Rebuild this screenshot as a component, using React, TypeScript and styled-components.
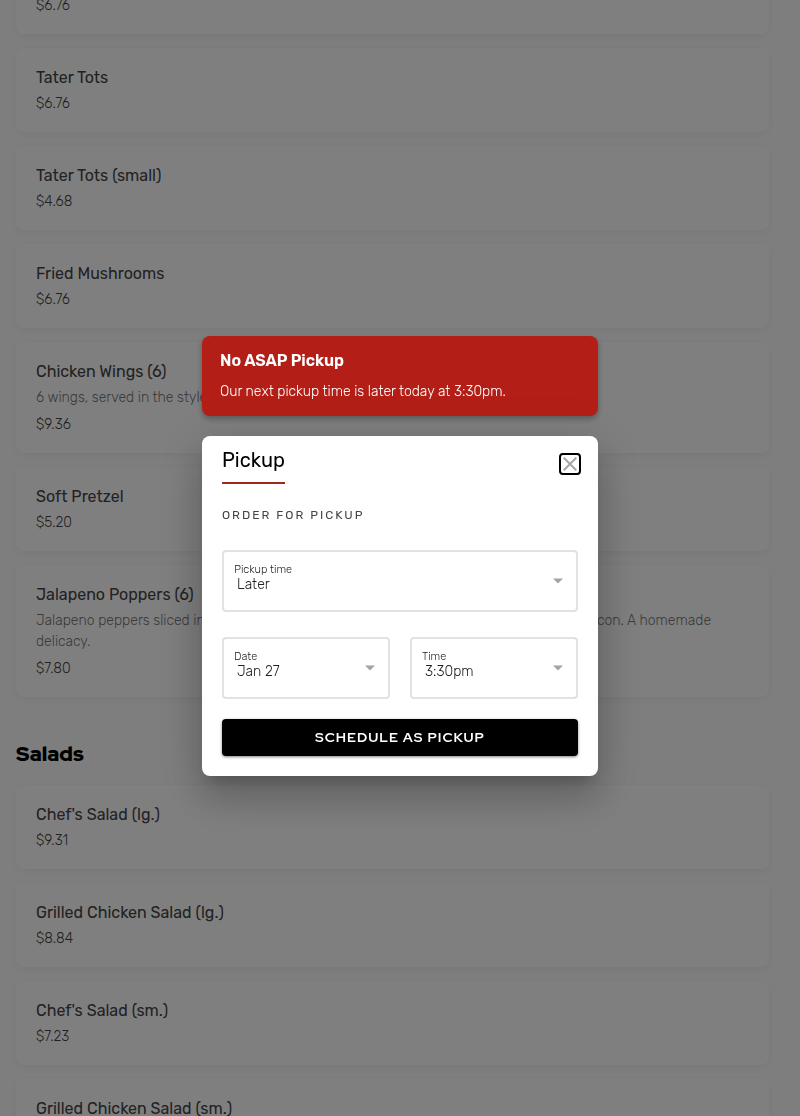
import React from "react";
import styled, { createGlobalStyle } from "styled-components";

const GlobalStyle = createGlobalStyle`
  *, *::before, *::after { box-sizing: border-box; }
  body {
    margin: 0;
    background: #fdfdfd;
    color: #000;
    font-family: Rubik, Inter, Roboto, "Liberation Sans", sans-serif;
  }
  h1, h2, h3, p, ul { margin: 0; padding: 0; }
  button, select { font-family: inherit; }
`;

const Page = styled.div`
  height: 100vh;
  overflow: hidden;
`;

const Menu = styled.main`
  margin-top: -50px;
  padding: 0 31px 0 16px;
`;

const SectionTitle = styled.h2`
  margin: 44px 0 18px;
  font-family: "Red Hat Display", Montserrat, Inter, sans-serif;
  font-size: 21px;
  line-height: 26px;
  font-weight: 900;
`;

const ItemList = styled.ul`
  display: flex;
  flex-direction: column;
  gap: 14px;
  list-style: none;
`;

const ItemCard = styled.li`
  padding: 20px 20px 18px;
  border-radius: 8px;
  background: #fff;
  box-shadow: 0 2px 8px rgba(0, 0, 0, 0.06);
`;

const ItemName = styled.h3`
  font-size: 16px;
  line-height: 20px;
  font-weight: 400;
  color: #444;
`;

const ItemDescription = styled.p`
  margin: 5px 0 7px;
  font-size: 14px;
  line-height: 21px;
  font-weight: 300;
  color: #777;
`;

const ItemPrice = styled.p`
  margin-top: 6px;
  font-size: 14px;
  line-height: 20px;
  font-weight: 300;
  color: #444;
`;

const Overlay = styled.div`
  position: fixed;
  inset: 0;
  display: flex;
  flex-direction: column;
  align-items: center;
  justify-content: center;
  gap: 20px;
  padding: 0 16px 4px;
  background: rgba(0, 0, 0, 0.5);
`;

const Alert = styled.div`
  display: flex;
  flex-direction: column;
  gap: 11px;
  width: 100%;
  max-width: 396px;
  padding: 15px 18px 14px;
  border-radius: 8px;
  background: #b31f17;
  color: #fff;
  box-shadow: 0 3px 6px rgba(0, 0, 0, 0.3);
`;

const AlertTitle = styled.h2`
  font-size: 16px;
  line-height: 20px;
  font-weight: 600;
`;

const AlertText = styled.p`
  font-size: 14px;
  line-height: 20px;
  font-weight: 300;
`;

const Dialog = styled.section`
  width: 100%;
  max-width: 396px;
  padding: 12px 20px 20px;
  border-radius: 8px;
  background: #fff;
  box-shadow: 0 11px 15px -7px rgba(0, 0, 0, 0.2),
    0 24px 38px 3px rgba(0, 0, 0, 0.14), 0 9px 46px 8px rgba(0, 0, 0, 0.12);
`;

const DialogHeader = styled.header`
  display: flex;
  align-items: flex-start;
  justify-content: space-between;
`;

const DialogTitle = styled.h2`
  padding-bottom: 10px;
  border-bottom: 2px solid #9c2a1c;
  font-size: 20px;
  line-height: 24px;
  font-weight: 400;
`;

const CloseButton = styled.button`
  display: flex;
  align-items: center;
  justify-content: center;
  width: 22px;
  height: 22px;
  margin: 5px -3px 0 0;
  padding: 0;
  border: 2px solid #000;
  border-radius: 4px;
  background: #fff;
  cursor: pointer;
`;

const Caption = styled.p`
  margin: 22px 0 26px;
  font-size: 12px;
  line-height: 18px;
  letter-spacing: 2px;
  text-transform: uppercase;
  color: #444;
`;

const Form = styled.form`
  display: grid;
  grid-template-columns: 1fr 1fr;
  column-gap: 20px;
`;

const Field = styled.div<{ $wide?: boolean }>`
  position: relative;
  grid-column: ${(p) => (p.$wide ? "1 / -1" : "auto")};
  margin-bottom: ${(p) => (p.$wide ? "25px" : "20px")};
`;

const FieldLabel = styled.label`
  position: absolute;
  top: 13px;
  left: 12px;
  font-size: 11px;
  line-height: 14px;
  font-weight: 300;
  color: #222;
  pointer-events: none;
`;

const FieldSelect = styled.select`
  display: block;
  width: 100%;
  height: 62px;
  padding: 6px 32px 0 13px;
  border: 2px solid #e2e2e2;
  border-radius: 4px;
  appearance: none;
  background: #fff;
  color: #222;
  font-size: 14px;
  font-weight: 300;
`;

const FieldArrow = styled.svg`
  position: absolute;
  top: 28px;
  right: 14px;
  pointer-events: none;
`;

const SubmitButton = styled.button`
  grid-column: 1 / -1;
  height: 37px;
  padding: 0 16px 2px;
  border: 0;
  border-radius: 4px;
  background: #000;
  color: #fff;
  font-family: "Red Hat Display", Montserrat, Inter, sans-serif;
  font-size: 14px;
  font-weight: 700;
  letter-spacing: 1px;
  text-transform: uppercase;
  box-shadow: 0 1px 3px rgba(0, 0, 0, 0.5);
  cursor: pointer;
`;

type Item = { name: string; description?: string; price: string };

const sides: Item[] = [
  { name: "French Fries", price: "$6.76" },
  { name: "Tater Tots", price: "$6.76" },
  { name: "Tater Tots (small)", price: "$4.68" },
  { name: "Fried Mushrooms", price: "$6.76" },
  {
    name: "Chicken Wings (6)",
    description: "6 wings, served in the style of your choice.",
    price: "$9.36",
  },
  { name: "Soft Pretzel", price: "$5.20" },
  {
    name: "Jalapeno Poppers (6)",
    description:
      "Jalapeno peppers sliced in halves, stuffed with cream cheese and wrapped in smoked bacon. A homemade delicacy.",
    price: "$7.80",
  },
];

const salads: Item[] = [
  { name: "Chef's Salad (lg.)", price: "$9.31" },
  { name: "Grilled Chicken Salad (lg.)", price: "$8.84" },
  { name: "Chef's Salad (sm.)", price: "$7.23" },
  { name: "Grilled Chicken Salad (sm.)", price: "$7.23" },
];

function Items({ items }: { items: Item[] }) {
  return (
    <ItemList>
      {items.map((item) => (
        <ItemCard key={item.name}>
          <ItemName>{item.name}</ItemName>
          {item.description && <ItemDescription>{item.description}</ItemDescription>}
          <ItemPrice>{item.price}</ItemPrice>
        </ItemCard>
      ))}
    </ItemList>
  );
}

type SelectFieldProps = { id: string; label: string; value: string; wide?: boolean };

function SelectField({ id, label, value, wide }: SelectFieldProps) {
  return (
    <Field $wide={wide}>
      <FieldSelect id={id} defaultValue={value}>
        <option>{value}</option>
      </FieldSelect>
      <FieldLabel htmlFor={id}>{label}</FieldLabel>
      <FieldArrow width="12" height="6" viewBox="0 0 12 6" aria-hidden="true">
        <path d="M1 0.5h10L6 5.5z" fill="#a3a3a3" />
      </FieldArrow>
    </Field>
  );
}

export default function App() {
  return (
    <Page>
      <GlobalStyle />
      <Menu>
        <Items items={sides} />
        <SectionTitle>Salads</SectionTitle>
        <Items items={salads} />
      </Menu>
      <Overlay>
        <Alert role="alert">
          <AlertTitle>No ASAP Pickup</AlertTitle>
          <AlertText>Our next pickup time is later today at 3:30pm.</AlertText>
        </Alert>
        <Dialog role="dialog" aria-modal="true" aria-labelledby="dialog-title">
          <DialogHeader>
            <DialogTitle id="dialog-title">Pickup</DialogTitle>
            <CloseButton type="button" aria-label="Close">
              <svg width="14" height="14" viewBox="0 0 14 14" aria-hidden="true">
                <path d="M0.8 0.8l12.4 12.4M13.2 0.8L0.8 13.2" stroke="#a6a6a6" strokeWidth="2" fill="none" />
              </svg>
            </CloseButton>
          </DialogHeader>
          <Caption>Order for pickup</Caption>
          <Form onSubmit={(e) => e.preventDefault()}>
            <SelectField id="pickup-time" label="Pickup time" value="Later" wide />
            <SelectField id="date" label="Date" value="Jan 27" />
            <SelectField id="time" label="Time" value="3:30pm" />
            <SubmitButton type="submit">Schedule as pickup</SubmitButton>
          </Form>
        </Dialog>
      </Overlay>
    </Page>
  );
}
